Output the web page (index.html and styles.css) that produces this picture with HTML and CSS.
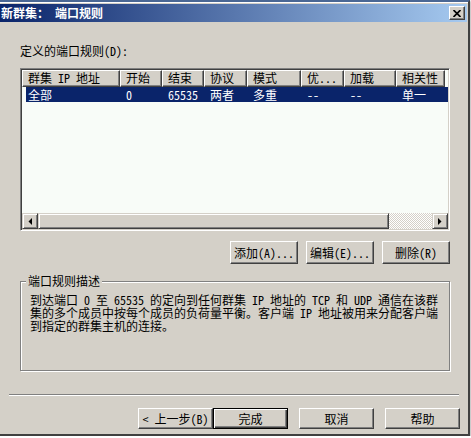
FILE: index.html
```html
<!DOCTYPE html>
<html lang="zh-CN">
<head>
  <meta charset="UTF-8">
  <title>新群集：端口规则</title>
  <link rel="stylesheet" href="styles.css">
</head>
<body>
  <div class="window">
    <div class="frame-top"></div>
    <div class="titlebar">
      <span class="title">新群集：　端口规则</span>
      <button class="close">
        <svg width="8" height="7" viewBox="0 0 8 7">
          <path d="M0.5 0 L7.5 7 M7.5 0 L0.5 7" stroke="#000" stroke-width="1.7" fill="none"/>
        </svg>
      </button>
    </div>

    <div class="body">
      <div class="label">定义的端口规则(D):</div>

      <div class="listview">
        <div class="lv-header">
          <div class="lv-col">群集 IP 地址</div>
          <div class="lv-col">开始</div>
          <div class="lv-col">结束</div>
          <div class="lv-col">协议</div>
          <div class="lv-col">模式</div>
          <div class="lv-col">优...</div>
          <div class="lv-col">加载</div>
          <div class="lv-col">相关性</div>
        </div>
        <div class="lv-body">
          <div class="lv-row selected">
            <div class="cell first">全部</div>
            <div class="cell">0</div>
            <div class="cell">65535</div>
            <div class="cell">两者</div>
            <div class="cell">多重</div>
            <div class="cell">--</div>
            <div class="cell">--</div>
            <div class="cell">单一</div>
          </div>
        </div>
        <div class="hscroll">
          <div class="sb-btn">
            <svg width="4" height="7" viewBox="0 0 4 7"><polygon points="4,0 0.5,3.5 4,7" fill="#000"/></svg>
          </div>
          <div class="sb-thumb"></div>
          <div class="sb-track"></div>
          <div class="sb-btn">
            <svg width="4" height="7" viewBox="0 0 4 7"><polygon points="0,0 3.5,3.5 0,7" fill="#000"/></svg>
          </div>
        </div>
      </div>

      <div class="rule-buttons">
        <button class="btn small">添加(A)...</button>
        <button class="btn small">编辑(E)...</button>
        <button class="btn small">删除(R)</button>
      </div>

      <fieldset class="group">
        <legend>端口规则描述</legend>
        <p class="desc">到达端口 0 至 65535 的定向到任何群集 IP 地址的 TCP 和 UDP 通信在该群<br>集的多个成员中按每个成员的负荷量平衡。客户端 IP 地址被用来分配客户端<br>到指定的群集主机的连接。</p>
      </fieldset>
    </div>

    <div class="separator"></div>

    <div class="footer">
      <button class="btn wide">&lt; 上一步(B)</button>
      <button class="btn wide default">完成</button>
      <button class="btn wide gap">取消</button>
      <button class="btn wide gap">帮助</button>
    </div>
  </div>
</body>
</html>
```

FILE: styles.css
```css
* {
  box-sizing: border-box;
}

body {
  margin: 0;
  background: #fff;
  font-family: "Noto Sans Mono CJK SC", "Noto Sans CJK SC", sans-serif;
  font-size: 12px;
  color: #000;
}

.window {
  width: 470px;
  height: 436px;
  background: #d4d0c8;
  border-top: 2px solid #4a6794;
  border-right: 2px solid #404040;
  border-bottom: 2px solid #404040;
  box-shadow: 1px 1px 2px rgba(0, 0, 0, 0.3);
  display: flex;
  flex-direction: column;
}

.frame-top {
  height: 2px;
  border-top: 1px solid #fff;
}

.titlebar {
  height: 18px;
  margin-right: 1px;
  padding: 0 2px 0 1px;
  background: linear-gradient(to right, #0a246a, #a6caf0);
  display: flex;
  align-items: center;
  justify-content: space-between;
}

.title {
  color: #fff;
  font-weight: bold;
  line-height: 18px;
  white-space: nowrap;
}

.close {
  width: 16px;
  height: 14px;
  padding: 0;
  background: #d4d0c8;
  border: 1px solid;
  border-color: #fff #404040 #404040 #fff;
  box-shadow: inset -1px -1px 0 #808080;
  display: flex;
  align-items: center;
  justify-content: center;
}

.body {
  padding: 23px 18px 0 20px;
}

.label {
  line-height: 12px;
  margin-bottom: 11px;
}

/* list view */
.listview {
  height: 163px;
  padding: 1px;
  background: #f8fcf8;
  border: 1px solid;
  border-color: #808080 #fff #fff #808080;
  box-shadow: inset 1px 1px 0 #404040, inset -1px -1px 0 #d4d0c8;
  display: flex;
  flex-direction: column;
}

.lv-header {
  display: grid;
  grid-template-columns: 98px 42px 42px 43px 54px 43px 52px 49px;
  height: 17px;
}

.lv-col {
  background: #d4d0c8;
  border: 1px solid;
  border-color: #fff #404040 #404040 #fff;
  box-shadow: inset -1px -1px 0 #808080;
  padding-left: 5px;
  line-height: 14px;
  white-space: nowrap;
  overflow: hidden;
}

.lv-body {
  flex: 1;
}

.lv-row {
  display: grid;
  grid-template-columns: 94px 42px 42px 43px 54px 43px 52px 51px;
  margin-left: 4px;
  height: 15px;
  line-height: 15px;
}

.lv-row.selected {
  background: #0a246a;
  color: #fff;
}

.cell {
  padding-left: 6px;
  white-space: nowrap;
}

.cell.first {
  padding-left: 2px;
}

.hscroll {
  height: 16px;
  display: flex;
}

.sb-btn,
.sb-thumb {
  background: #d4d0c8;
  border: 1px solid;
  border-color: #d4d0c8 #404040 #404040 #d4d0c8;
  box-shadow: inset 1px 1px 0 #fff, inset -1px -1px 0 #808080;
}

.sb-btn {
  width: 16px;
  display: flex;
  align-items: center;
  justify-content: center;
}

.sb-thumb {
  width: 351px;
}

.sb-track {
  flex: 1;
  background: repeating-conic-gradient(#fff 0 25%, #d4d0c8 0 50%) 0 0 / 2px 2px;
}

/* buttons */
.btn {
  font: inherit;
  color: #000;
  padding: 0;
  background: #d4d0c8;
  border: 1px solid;
  border-color: #fff #404040 #404040 #fff;
  box-shadow: inset -1px -1px 0 #808080;
  white-space: nowrap;
}

.btn.default {
  border-color: #000;
  box-shadow: inset 1px 1px 0 #fff, inset -1px -1px 0 #404040, inset -2px -2px 0 #808080;
}

.rule-buttons {
  display: flex;
  justify-content: flex-end;
  gap: 8px;
  margin-top: 10px;
}

.btn.small {
  width: 68px;
  height: 23px;
}

/* description group */
.group {
  margin: 11px 0 0;
  padding: 6px 9px 0;
  height: 96px;
  min-width: 0;
  border: 1px solid #808080;
  box-shadow: inset 1px 1px 0 #fff, 1px 1px 0 #fff;
}

.group legend {
  margin-left: -4px;
  padding: 0 2px;
  background: #d4d0c8;
  line-height: 12px;
}

.desc {
  margin: 0;
  line-height: 13px;
  white-space: nowrap;
}

.separator {
  height: 2px;
  margin: 23px 9px 0;
  border-top: 1px solid #808080;
  border-bottom: 1px solid #fff;
}

.footer {
  display: flex;
  justify-content: flex-end;
  padding-right: 8px;
  margin-top: 12px;
}

.btn.wide {
  width: 75px;
  height: 21px;
}

.btn.gap {
  margin-left: 11px;
}
```
